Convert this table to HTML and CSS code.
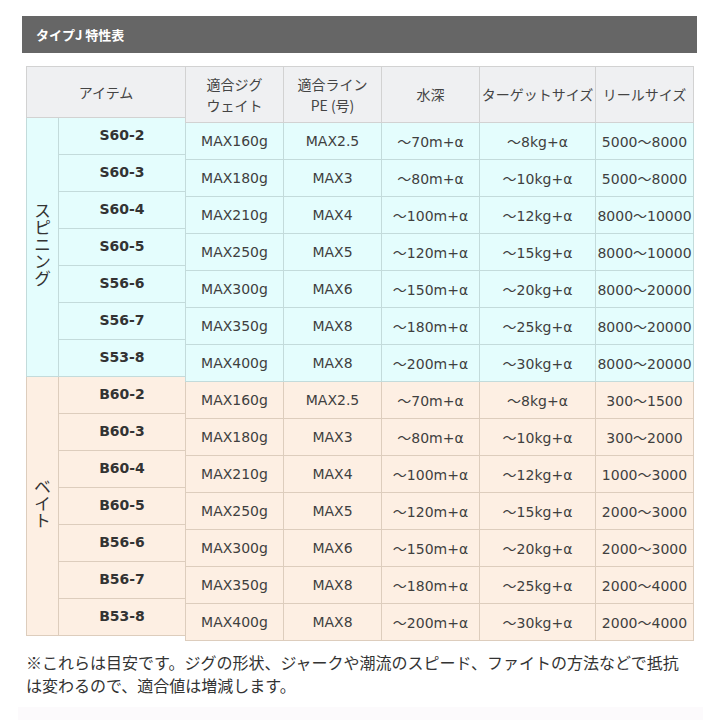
FILE: index.html
```html
<!DOCTYPE html>
<html lang="ja">
<head>
<meta charset="utf-8">
<title>タイプJ 特性表</title>
<link rel="stylesheet" href="styles.css">
</head>
<body>
<div class="page">
  <div class="title">タイプJ 特性表</div>
  <div class="tables">
    <div class="items">
      <div class="cell head span2">アイテム</div>
      <div class="cell cat spin">スピニング</div>
      <div class="cell model spin">S60-2</div>
      <div class="cell model spin">S60-3</div>
      <div class="cell model spin">S60-4</div>
      <div class="cell model spin">S60-5</div>
      <div class="cell model spin">S56-6</div>
      <div class="cell model spin">S56-7</div>
      <div class="cell model spin">S53-8</div>
      <div class="cell cat bait">ベイト</div>
      <div class="cell model bait">B60-2</div>
      <div class="cell model bait">B60-3</div>
      <div class="cell model bait">B60-4</div>
      <div class="cell model bait">B60-5</div>
      <div class="cell model bait">B56-6</div>
      <div class="cell model bait">B56-7</div>
      <div class="cell model bait">B53-8</div>
    </div>
    <div class="specs">
      <div class="cell head first">適合ジグ<br>ウェイト</div>
      <div class="cell head">適合ライン<br>PE (号)</div>
      <div class="cell head">水深</div>
      <div class="cell head">ターゲットサイズ</div>
      <div class="cell head">リールサイズ</div>

      <div class="cell spin first">MAX160g</div><div class="cell spin">MAX2.5</div><div class="cell spin">～70m+α</div><div class="cell spin">～8kg+α</div><div class="cell spin">5000～8000</div>
      <div class="cell spin first">MAX180g</div><div class="cell spin">MAX3</div><div class="cell spin">～80m+α</div><div class="cell spin">～10kg+α</div><div class="cell spin">5000～8000</div>
      <div class="cell spin first">MAX210g</div><div class="cell spin">MAX4</div><div class="cell spin">～100m+α</div><div class="cell spin">～12kg+α</div><div class="cell spin">8000～10000</div>
      <div class="cell spin first">MAX250g</div><div class="cell spin">MAX5</div><div class="cell spin">～120m+α</div><div class="cell spin">～15kg+α</div><div class="cell spin">8000～10000</div>
      <div class="cell spin first">MAX300g</div><div class="cell spin">MAX6</div><div class="cell spin">～150m+α</div><div class="cell spin">～20kg+α</div><div class="cell spin">8000～20000</div>
      <div class="cell spin first">MAX350g</div><div class="cell spin">MAX8</div><div class="cell spin">～180m+α</div><div class="cell spin">～25kg+α</div><div class="cell spin">8000～20000</div>
      <div class="cell spin first">MAX400g</div><div class="cell spin">MAX8</div><div class="cell spin">～200m+α</div><div class="cell spin">～30kg+α</div><div class="cell spin">8000～20000</div>

      <div class="cell bait first">MAX160g</div><div class="cell bait">MAX2.5</div><div class="cell bait">～70m+α</div><div class="cell bait">～8kg+α</div><div class="cell bait">300～1500</div>
      <div class="cell bait first">MAX180g</div><div class="cell bait">MAX3</div><div class="cell bait">～80m+α</div><div class="cell bait">～10kg+α</div><div class="cell bait">300～2000</div>
      <div class="cell bait first">MAX210g</div><div class="cell bait">MAX4</div><div class="cell bait">～100m+α</div><div class="cell bait">～12kg+α</div><div class="cell bait">1000～3000</div>
      <div class="cell bait first">MAX250g</div><div class="cell bait">MAX5</div><div class="cell bait">～120m+α</div><div class="cell bait">～15kg+α</div><div class="cell bait">2000～3000</div>
      <div class="cell bait first">MAX300g</div><div class="cell bait">MAX6</div><div class="cell bait">～150m+α</div><div class="cell bait">～20kg+α</div><div class="cell bait">2000～3000</div>
      <div class="cell bait first">MAX350g</div><div class="cell bait">MAX8</div><div class="cell bait">～180m+α</div><div class="cell bait">～25kg+α</div><div class="cell bait">2000～4000</div>
      <div class="cell bait first">MAX400g</div><div class="cell bait">MAX8</div><div class="cell bait">～200m+α</div><div class="cell bait">～30kg+α</div><div class="cell bait">2000～4000</div>
    </div>
  </div>
  <p class="note">※これらは目安です。ジグの形状、ジャークや潮流のスピード、ファイトの方法などで抵抗は変わるので、適合値は増減します。</p>
  <div class="band"></div>
</div>
</body>
</html>
```

FILE: styles.css
```css
* { box-sizing: border-box; }
html, body { margin: 0; padding: 0; background: #ffffff; }
body {
  font-family: "DejaVu Sans", "Noto Sans CJK JP", sans-serif;
  color: #3f3f3f;
}
.page {
  padding: 16px 23px 0 22px;
  width: 720px;
}
.title {
  height: 37px;
  background: #666666;
  color: #ffffff;
  font-family: "Noto Sans CJK JP", sans-serif;
  font-weight: bold;
  font-size: 13px;
  line-height: 37px;
  padding-left: 14px;
}
.tables {
  display: flex;
  align-items: flex-start;
  margin-top: 13px;
  padding-left: 4px;
}
.items {
  display: grid;
  grid-template-columns: 33px 127px;
  grid-template-rows: 52px repeat(14, 37px);
}
.specs {
  display: grid;
  margin-left: -1px;
  grid-template-columns: 99px 98px 98px 116px 98px;
  grid-template-rows: 57px repeat(14, 37px);
}
.cell {
  display: flex;
  align-items: center;
  justify-content: center;
  text-align: center;
  font-size: 14px;
  border-right: 1px solid #d2d2d2;
  border-bottom: 1px solid #d2d2d2;
  white-space: nowrap;
}
.head {
  background: #eff0f2;
  border-top: 1px solid #d2d2d2;
  font-family: "Noto Sans CJK JP", sans-serif;
  line-height: 21px;
  color: #444;
}
.span2 { grid-column: span 2; border-left: 1px solid #d2d2d2; }
.first { border-left: 1px solid #d2d2d2; }
.spin {
  background: #e4fdfd;
  border-color: #c3dbdb;
}
.bait {
  background: #fdefe3;
  border-color: #ddcdbd;
}
.cat {
  grid-row: span 7;
  border-left-width: 1px;
  border-left-style: solid;
  writing-mode: vertical-rl;
  text-orientation: upright;
  font-family: "Noto Sans CJK JP", sans-serif;
  font-size: 17px;
  color: #333;
  padding-bottom: 6px;
}
.model {
  font-weight: bold;
  color: #333;
  padding-bottom: 2px;
}
.note {
  margin: 10px 0 0 4px;
  width: 666px;
  font-family: "Noto Sans CJK JP", sans-serif;
  font-size: 16px;
  line-height: 23px;
  color: #333;
}
.band {
  margin: 10px -6px 0 -4px;
  height: 16px;
  background: #fcfafc;
}
```
